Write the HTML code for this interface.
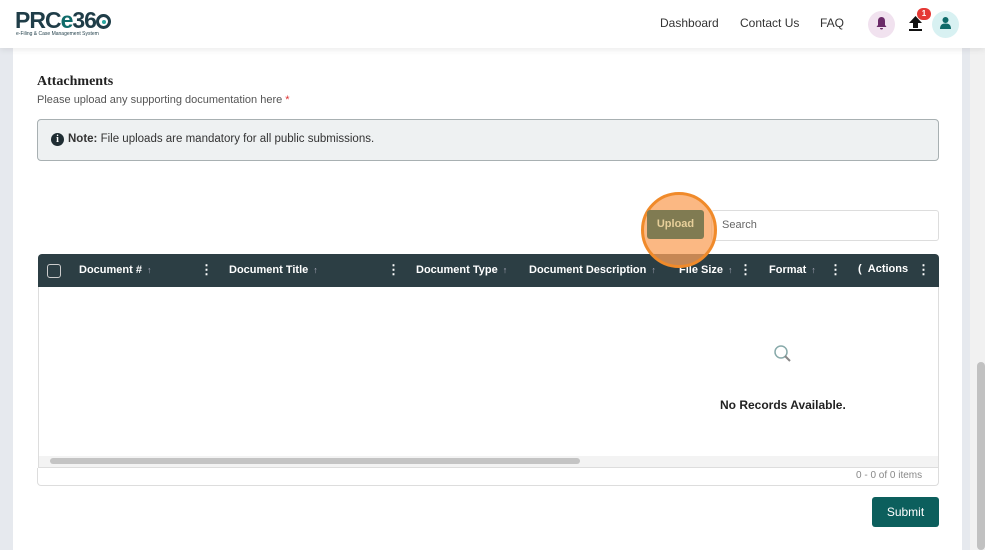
<!DOCTYPE html>
<html><head><style>
*{box-sizing:border-box;margin:0;padding:0}
body{width:985px;height:550px;overflow:hidden;background:#e6e9ee;font-family:"Liberation Sans",sans-serif;position:relative}
.hdr{position:absolute;left:0;top:0;width:985px;height:48px;background:#fff;box-shadow:0 2px 6px rgba(0,0,0,.08);z-index:5}
.card{position:absolute;left:13px;top:48px;width:949px;height:502px;background:#fff}
.sb{position:absolute;left:970px;top:48px;width:15px;height:502px;background:#f1f1f1}
.thumb{position:absolute;left:977px;top:362px;width:8px;height:188px;background:#c1c1c1;border-radius:4px}
.abs{position:absolute}
.th{position:absolute;top:264px;color:#fff;font-size:11px;font-weight:bold;white-space:nowrap}
.ar{font-size:9px;color:#aab;margin-left:5px}
.dots{position:absolute;top:263px;color:#fff;font-weight:bold;font-size:13px;line-height:13px}
</style></head><body>
<div class="hdr">
 <div class="abs" style="left:15px;top:7px;font-size:23px;font-weight:bold;color:#1f3d48;letter-spacing:-1px">PRC<span style="color:#0f6b6a">e</span>36<span style="display:inline-block;width:15px;height:15px;border:3px solid #1f3d48;border-radius:50%;vertical-align:-1px;position:relative"><span style="position:absolute;left:3px;top:3px;width:4px;height:4px;background:#2aa6a0;border-radius:50%"></span></span></div>
 <div class="abs" style="left:16px;top:31px;font-size:5px;color:#1f3d48">e-Filing &amp; Case Management System</div>
 <div class="abs" style="left:660px;top:16px;font-size:12px;color:#333">Dashboard</div>
 <div class="abs" style="left:740px;top:16px;font-size:12px;color:#333">Contact Us</div>
 <div class="abs" style="left:820px;top:16px;font-size:12px;color:#333">FAQ</div>
 <div class="abs" style="left:868px;top:11px;width:27px;height:27px;border-radius:50%;background:#f1e2ef"></div>
 <svg class="abs" style="left:876px;top:17px" width="11" height="13" viewBox="0 0 11 13"><path d="M5.5 0C3 0 2 2 2 4v4L0.5 10h10L9 8V4C9 2 8 0 5.5 0z M4 11h3a1.5 1.5 0 0 1-3 0z" fill="#6b2a68"/></svg>
 <svg class="abs" style="left:909px;top:16px" width="13" height="15" viewBox="0 0 13 15"><path d="M6.5 0L0 7h4v5h5V7h4z M0 13h13v2H0z" fill="#111"/></svg>
 <div class="abs" style="left:917px;top:8px;width:14px;height:12px;border-radius:6px;background:#e53935;color:#fff;font-size:8px;font-weight:bold;text-align:center;line-height:12px">1</div>
 <div class="abs" style="left:932px;top:11px;width:27px;height:27px;border-radius:50%;background:#d8f1f2"></div>
 <svg class="abs" style="left:940px;top:17px" width="11" height="12" viewBox="0 0 11 12"><circle cx="5.5" cy="3" r="3" fill="#0f6b6a"/><path d="M0 12c0-4 2-5.5 5.5-5.5S11 8 11 12z" fill="#0f6b6a"/></svg>
</div>
<div class="card"></div>
<div class="sb"></div><div class="thumb"></div>
<div class="abs" style="left:37px;top:74px;font-family:'Liberation Serif',serif;font-size:14px;font-weight:bold;color:#222">Attachments</div>
<div class="abs" style="left:37px;top:94px;font-size:11px;color:#555">Please upload any supporting documentation here <span style="color:#d33">*</span></div>
<div class="abs" style="left:37px;top:119px;width:902px;height:42px;background:#eef1f2;border:1px solid #a8b0b2;border-radius:4px"></div>
<div class="abs" style="left:51px;top:133px;width:13px;height:13px;border-radius:50%;background:#1f2d33;color:#fff;font-size:10px;font-weight:bold;text-align:center;line-height:13px;font-family:'Liberation Serif',serif">i</div>
<div class="abs" style="left:68px;top:133px;font-size:11.5px;color:#333"><b>Note:</b> File uploads are mandatory for all public submissions.</div>
<div class="abs" style="left:711px;top:210px;width:228px;height:31px;border:1px solid #ddd;border-radius:3px;font-size:11px;color:#666;padding:8px 10px">Search</div>
<div class="abs" style="left:38px;top:254px;width:901px;height:214px;border:1px solid #ddd;border-radius:4px 4px 0 0"></div>
<div class="abs" style="left:38px;top:254px;width:901px;height:33px;background:#2c3e44;border-radius:4px 4px 0 0"></div>
<div class="abs" style="left:47px;top:264px;width:14px;height:14px;border:1px solid #ccc;border-radius:3px"></div>
<div class="th" style="left:79px">Document #<span class="ar">↑</span></div>
<div class="dots" style="left:200px">⋮</div>
<div class="th" style="left:229px">Document Title<span class="ar">↑</span></div>
<div class="dots" style="left:387px">⋮</div>
<div class="th" style="left:416px">Document Type<span class="ar">↑</span></div>
<div class="th" style="left:529px">Document Description<span class="ar">↑</span></div>
<div class="th" style="left:679px">File Size<span class="ar">↑</span></div>
<div class="dots" style="left:739px">⋮</div>
<div class="th" style="left:769px">Format<span class="ar">↑</span></div>
<div class="dots" style="left:829px">⋮</div>
<div class="th" style="left:858px;top:263px">( &nbsp;Actions</div>
<div class="dots" style="left:917px">⋮</div>
<svg class="abs" style="left:772px;top:343px" width="22" height="22" viewBox="0 0 22 22"><circle cx="9" cy="9" r="6" fill="none" stroke="#8aa" stroke-width="1.5"/><path d="M13 13l5 5" stroke="#888" stroke-width="2"/></svg>
<div class="abs" style="left:720px;top:398px;font-size:12px;font-weight:bold;color:#222">No Records Available.</div>
<div class="abs" style="left:39px;top:456px;width:899px;height:11px;background:#f3f3f3"></div>
<div class="abs" style="left:50px;top:458px;width:530px;height:6px;background:#c4c4c4;border-radius:3px"></div>
<div class="abs" style="left:37px;top:468px;width:902px;height:18px;border:1px solid #ddd;border-top:none;border-radius:0 0 4px 4px"></div>
<div class="abs" style="left:856px;top:470px;font-size:10px;color:#888">0 - 0 of 0 items</div>
<div class="abs" style="left:872px;top:497px;width:67px;height:30px;background:#0c5f5d;border-radius:3px;color:#fff;font-size:12px;text-align:center;line-height:30px">Submit</div>
<div class="abs" style="left:641px;top:192px;width:76px;height:76px;border-radius:50%;background:rgba(250,160,90,.75);border:3px solid #f08a2a"></div>
<div class="abs" style="left:647px;top:210px;width:57px;height:29px;background:#807b52;border-radius:3px;color:#e7cf9a;font-size:11px;font-weight:bold;text-align:center;line-height:29px">Upload</div>
</body></html>
